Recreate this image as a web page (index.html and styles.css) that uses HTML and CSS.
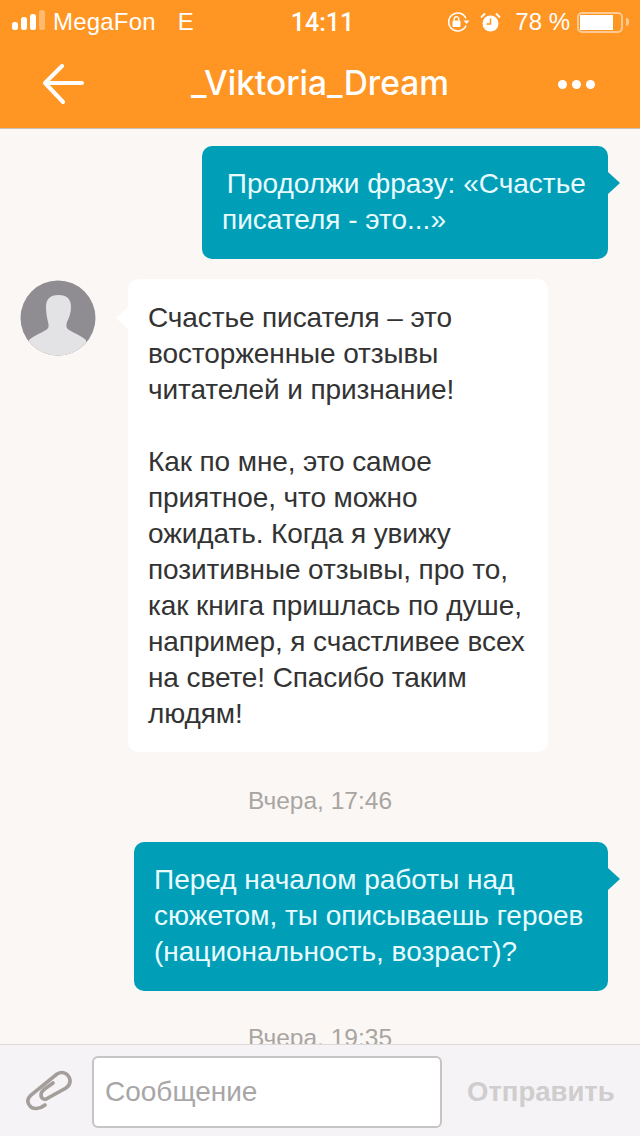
FILE: index.html
```html
<!DOCTYPE html>
<html lang="ru">
<head>
    <meta charset="UTF-8">
    <meta name="viewport" content="width=device-width, initial-scale=1.0">
    <title>_Viktoria_Dream</title>
    <link rel="stylesheet" href="styles.css">
</head>
<body>
<div class="app">
    <div class="top">
        <div class="status-bar">
            <div class="status-left">
                <svg class="signal" width="33" height="20" viewBox="0 0 33 20">
                    <rect x="0" y="12" width="6" height="8" rx="2.5" fill="#fff"/>
                    <rect x="9" y="7" width="6" height="13" rx="2.5" fill="#fff"/>
                    <rect x="18" y="4" width="6" height="16" rx="2.5" fill="#fff"/>
                    <rect x="27" y="0" width="6" height="20" rx="2.5" fill="#fff" opacity="0.35"/>
                </svg>
                <span class="carrier">MegaFon</span>
                <span class="network">E</span>
            </div>
            <div class="clock">14:11</div>
            <div class="status-right">
                <svg width="24" height="22" viewBox="0 0 24 22">
                    <path d="M20 7.5A9 9 0 1 0 20 14.5" fill="none" stroke="#fff" stroke-width="1.6"/>
                    <path d="M17.5 9.5h6l-3 3.5z" fill="#fff"/>
                    <rect x="6.5" y="9.5" width="8" height="6.5" rx="1" fill="#fff"/>
                    <path d="M8.2 9.5V8a2.3 2.3 0 0 1 4.6 0v1.5" fill="none" stroke="#fff" stroke-width="1.4"/>
                </svg>
                <svg class="alarm" width="21" height="21" viewBox="0 0 21 21">
                    <circle cx="10.5" cy="11.5" r="8" fill="#fff"/>
                    <path d="M10.5 6.5v5.5H6.5" fill="none" stroke="#ff9522" stroke-width="1.5"/>
                    <path d="M1 5.5L5 1.5M20 5.5L16 1.5" stroke="#fff" stroke-width="1.8"/>
                </svg>
                <span class="battery-text">78 %</span>
                <div class="battery"><div class="battery-level"></div></div>
                <div class="battery-tip"></div>
            </div>
        </div>
        <div class="nav-bar">
            <svg class="back" width="42" height="42" viewBox="0 0 42 42">
                <path d="M40 19H3M20 2L3 19l18 19" fill="none" stroke="#fff" stroke-width="4" stroke-linecap="round" stroke-linejoin="round"/>
            </svg>
            <h1 class="title">_Viktoria_Dream</h1>
            <div class="dots"><i></i><i></i><i></i></div>
        </div>
    </div>

    <div class="messages">
        <div class="bubble out out-first">
            <p>&nbsp;Продолжи фразу: «Счастье писателя - это...»</p>
        </div>
        <div class="incoming">
            <svg class="avatar" width="76" height="76" viewBox="0 0 76 76">
                <defs><clipPath id="round"><circle cx="38" cy="38" r="37.5"/></clipPath></defs>
                <circle cx="38" cy="38" r="37.5" fill="#8f8d92"/>
                <path clip-path="url(#round)" d="M26 27c0-8 4-12 12.500-12s12.500 4 12.500 12c0 6-2 11-4 15-1 4-1 6 2 8 5 3 11 5 17 10v20H9V60c6-5 12-7 17-10 3-2 3-4 2-8-1-4-2-9-2-15z" fill="#e3e2e5"/>
            </svg>
            <div class="bubble in">
                <p>Счастье писателя – это восторженные отзывы читателей и признание!</p>
                <p class="gap">Как по мне, это самое приятное, что можно ожидать. Когда я увижу позитивные отзывы, про то, как книга пришлась по душе, например, я счастливее всех на свете! Спасибо таким людям!</p>
            </div>
        </div>
        <div class="time">Вчера, 17:46</div>
        <div class="bubble out out-second">
            <p>Перед началом работы над сюжетом, ты описываешь героев (национальность, возраст)?</p>
        </div>
        <div class="time time-last">Вчера, 19:35</div>
    </div>

    <div class="composer">
        <svg class="clip" width="54" height="54" viewBox="0 0 54 54">
            <path d="M25 40C20 44 13 45 10 41C6 37 8 33 11 30L37 9C42 6 47 8 49 12C51 16 50 20 46 23L28 33C24 36 21 33 21 30C21 27 23 25 26 23L33 18" fill="none" stroke="#a49e9b" stroke-width="3.600" stroke-linecap="round"/>
        </svg>
        <div class="input">Сообщение</div>
        <div class="send">Отправить</div>
    </div>
</div>
</body>
</html>
```

FILE: styles.css
```css
* {
    box-sizing: border-box;
}

body {
    margin: 0;
    font-family: "Liberation Sans", Arial, sans-serif;
    background: #fbf7f4;
}

p {
    margin: 0;
}

.app {
    display: flex;
    flex-direction: column;
    height: 1136px;
    overflow: hidden;
}

.top {
    height: 129px;
    flex-shrink: 0;
    background: #ff9522;
    border-bottom: 1px solid #c9c1ba;
    color: #fff;
}

.status-bar {
    display: grid;
    grid-template-columns: 1fr auto 1fr;
    align-items: center;
    height: 44px;
    padding: 0 11px 0 12px;
    font-size: 24px;
}

.status-left {
    display: flex;
    align-items: center;
}

.signal {
    margin-right: 8px;
    margin-bottom: 4px;
}

.carrier {
    letter-spacing: 0.2px;
}

.network {
    margin-left: 22px;
}

.clock {
    margin-left: 4px;
    font-family: Roboto, sans-serif;
    font-size: 25px;
    font-weight: 500;
}

.status-right {
    display: flex;
    align-items: center;
    justify-content: flex-end;
}

.alarm {
    margin-left: 10px;
}

.battery-text {
    margin-left: 14px;
}

.battery {
    width: 46px;
    height: 21px;
    margin-left: 7px;
    padding: 1px;
    border: 2px solid rgba(255, 255, 255, 0.5);
    border-radius: 5px;
}

.battery-level {
    width: 33px;
    height: 100%;
    background: #fff;
}

.battery-tip {
    width: 3px;
    height: 8px;
    margin-left: 3px;
    background: rgba(255, 255, 255, 0.5);
    border-radius: 0 3px 3px 0;
}

.nav-bar {
    display: flex;
    align-items: center;
    justify-content: center;
    position: relative;
    height: 84px;
    padding-bottom: 6px;
}

.back {
    position: absolute;
    left: 42px;
    top: 20px;
}

.title {
    margin: 0;
    font-family: Inter, sans-serif;
    font-size: 33.500px;
    font-weight: 500;
}

.dots {
    position: absolute;
    right: 45px;
    top: 36px;
    display: flex;
    gap: 5px;
}

.dots i {
    width: 9px;
    height: 9px;
    background: #fff;
    border-radius: 50%;
}

.messages {
    flex: 1;
    min-height: 0;
    overflow: hidden;
    padding-top: 17px;
}

.bubble {
    position: relative;
    font-size: 28px;
    line-height: 36px;
    border-radius: 10px;
}

.bubble::after {
    content: "";
    position: absolute;
    top: 26px;
    border-style: solid;
    border-width: 11px 12px;
    border-color: transparent;
}

.out {
    margin-left: auto;
    margin-right: 32px;
    background: #009fb7;
    color: #e9fbff;
}

.out::after {
    left: 100%;
    border-right-width: 0;
    border-left-color: #009fb7;
}

.out-first {
    width: 406px;
    padding: 20px 14px 21px 20px;
    text-indent: -3px;
}

.out-second {
    width: 474px;
    padding: 20px 14px 21px 20px;
}

.incoming {
    display: flex;
    margin-top: 20px;
    padding-left: 20px;
}

.avatar {
    flex-shrink: 0;
    margin-top: 1px;
}

.in {
    width: 420px;
    margin-left: 32px;
    padding: 21px 16px 20px 20px;
    background: #fff;
    color: #333;
    letter-spacing: -0.1px;
}

.in::after {
    top: 28px;
    right: 100%;
    border-left-width: 0;
    border-right-color: #fff;
}

.gap {
    margin-top: 36px;
}

.time {
    margin-top: 34px;
    margin-bottom: 26px;
    text-align: center;
    font-size: 24.500px;
    line-height: 30px;
    color: #a8a5a2;
}

.time-last {
    margin-top: 32px;
}

.composer {
    display: flex;
    align-items: center;
    height: 92px;
    flex-shrink: 0;
    padding: 2px 20px 0 20px;
    background: #f5f3f6;
    border-top: 1px solid #dcd8d8;
}

.clip {
    flex-shrink: 0;
}

.input {
    display: flex;
    align-items: center;
    width: 350px;
    height: 72px;
    margin-left: 18px;
    padding-left: 11px;
    background: #fff;
    border: 2px solid #c6c4c4;
    border-radius: 6px;
    font-size: 28px;
    color: #a8a6a6;
}

.send {
    margin-left: 25px;
    font-size: 27.500px;
    font-weight: bold;
    color: #cfcdcd;
}
```
